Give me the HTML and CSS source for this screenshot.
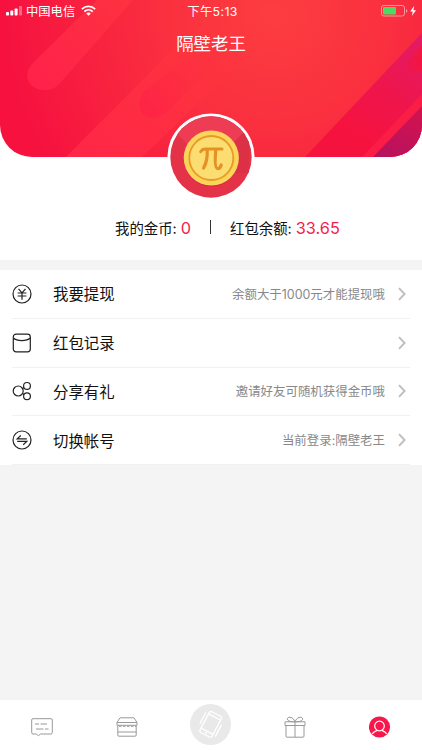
FILE: index.html
```html
<!DOCTYPE html>
<html lang="zh-CN">
<head>
<meta charset="utf-8">
<meta name="viewport" content="width=device-width, initial-scale=1">
<title>隔壁老王</title>
<link rel="stylesheet" href="styles.css">
</head>
<body>
<div class="app">
  <header class="hero">
    <svg class="hero-bg" viewBox="0 0 422 157" preserveAspectRatio="none">
      <defs>
        <radialGradient id="base" gradientUnits="userSpaceOnUse" cx="275" cy="15" r="275">
          <stop offset="0" stop-color="#fc3d40"/><stop offset=".4" stop-color="#fa303f"/><stop offset="1" stop-color="#f6113f"/>
        </radialGradient>
        <linearGradient id="pill" gradientUnits="userSpaceOnUse" x1="40" y1="80" x2="120" y2="0">
          <stop offset="0" stop-color="#ff224a"/><stop offset="1" stop-color="#fd3140"/>
        </linearGradient>
        <linearGradient id="band" gradientUnits="userSpaceOnUse" x1="90" y1="157" x2="250" y2="0">
          <stop offset="0" stop-color="#ff2747"/><stop offset=".6" stop-color="#fd323f"/><stop offset="1" stop-color="#fc3a3e" stop-opacity="0"/>
        </linearGradient>
        <linearGradient id="inner" gradientUnits="userSpaceOnUse" x1="145" y1="112" x2="215" y2="40">
          <stop offset="0" stop-color="#fe2445"/><stop offset="1" stop-color="#fd333f" stop-opacity="0"/>
        </linearGradient>
        <linearGradient id="edge" gradientUnits="userSpaceOnUse" x1="422" y1="33" x2="350" y2="140">
          <stop offset="0" stop-color="#e31b66"/><stop offset=".55" stop-color="#ef154b"/><stop offset="1" stop-color="#f6123e"/>
        </linearGradient>
        <linearGradient id="corner" gradientUnits="userSpaceOnUse" x1="422" y1="106" x2="385" y2="157">
          <stop offset="0" stop-color="#d4124e"/><stop offset="1" stop-color="#b8125f"/>
        </linearGradient>
        <linearGradient id="spot" gradientUnits="userSpaceOnUse" x1="404" y1="0" x2="422" y2="0">
          <stop offset="0" stop-color="#ee1548" stop-opacity=".3"/><stop offset="1" stop-color="#f5153e"/>
        </linearGradient>
      </defs>
      <rect width="422" height="157" fill="url(#base)"/>
      <path d="M97 0 32 64C21 77 31 90 44 90C51 90 56 88 61 82L133 0Z" fill="url(#pill)"/>
      <path d="M66 157 222 0H305L142 157Z" fill="url(#band)"/>
      <path d="M222 30 144 91C134 106 142 118 153 118C159 118 164 115 168 111L250 30Z" fill="url(#inner)"/>
      <path d="M305 157 422 33V157Z" fill="url(#edge)"/>
      <path d="M422 45 410 57C401 68 409 76 422 70Z" fill="url(#spot)"/>
      <path d="M362 157 422 94V107L373 157Z" fill="#fa1d45"/>
      <path d="M373 157 422 106V157Z" fill="url(#corner)"/>
    </svg>
    <div class="status">
      <div class="carrier">
        <svg width="17" height="10" viewBox="0 0 17 10" fill="#fff"><rect x="0" y="6" width="3" height="3.5" rx=".7"/><rect x="4.3" y="4.4" width="3" height="5.1" rx=".7"/><rect x="8.6" y="2.5" width="3" height="7" rx=".7"/><rect x="13" y="0" width="3" height="9.5" rx=".7" opacity=".35"/></svg>
        <span class="carrier-name">中国电信</span>
        <svg width="15" height="11" viewBox="0 0 15 11" fill="none" stroke="#fff" stroke-width="1.9"><path d="M.9 4.1C4.6.4 10.4.4 14.1 4.1M3.3 6.6C5.7 4.3 9.3 4.3 11.7 6.6"/><path d="M7.5 10.8 5.2 8.4C6.5 7.2 8.5 7.2 9.8 8.4Z" fill="#fff" stroke="none"/></svg>
      </div>
      <span class="clock">下午5:13</span>
      <svg class="battery" width="37" height="12" viewBox="0 0 37 12"><rect x=".5" y=".5" width="23" height="10.5" rx="2.3" fill="none" stroke="#fff" stroke-opacity=".5"/><rect x="2" y="2" width="13" height="7.5" rx=".8" fill="#4cd964"/><path d="M25 4V8Q26.4 7 26.4 6T25 4" fill="#fff" opacity=".5"/><path d="M33.2.8 29.2 6.5H31.8L30.8 11 35 5.2H32.4Z" fill="#fff"/></svg>
    </div>
    <h1 class="title">隔壁老王</h1>
  </header>
  <section class="profile">
    <svg class="avatar" viewBox="0 0 88 88">
      <defs><clipPath id="disc"><circle cx="44" cy="44" r="40.7"/></clipPath></defs>
      <circle cx="44" cy="44" r="43.6" fill="#fff"/>
      <g clip-path="url(#disc)">
        <rect width="88" height="88" fill="#e43249"/>
        <path d="M0 10 44 56 88 10V0H0Z" fill="#ed3c54"/>
        <path d="M65 31 82 14V60L60 60Z" fill="#dc3047"/>
      </g>
      <circle cx="44.3" cy="46" r="27.6" fill="#dc293c"/>
      <circle cx="44.3" cy="45" r="27.6" fill="#fbd45c"/>
      <circle cx="44.3" cy="45" r="22" fill="#fbdd72" stroke="#e99a25" stroke-width="1.8"/>
      <path d="M33.7 38.6C35 36.2 36.5 36 39 36H55" fill="none" stroke="#e59124" stroke-width="3" stroke-linecap="round"/>
      <path d="M40.2 37C40.6 44 39.4 50 36.6 55M48.8 37C48 46 47.8 55 50.4 55.5C52.3 55.8 53.6 54 54.2 52" fill="none" stroke="#e59124" stroke-width="3.2" stroke-linecap="round"/>
    </svg>
    <div class="balances">
      <span>我的金币: <b>0</b></span><i class="divider"></i><span>红包余额: <b>33.65</b></span>
    </div>
  </section>
  <main class="menu">
    <div class="row">
      <svg class="icon" viewBox="0 0 20 20"><circle cx="10" cy="10" r="9"/><path d="M6.5 4.8 10 8.8 13.5 4.8M5.6 9H14.4M5.6 12H14.4M10 8.8V15.8"/></svg>
      <span class="label">我要提现</span><span class="hint">余额大于1000元才能提现哦</span>
      <svg class="arrow" viewBox="0 0 8 14"><path d="M1 1.2 6.6 7 1 12.8"/></svg>
    </div>
    <div class="row">
      <svg class="icon" viewBox="0 0 20 20"><rect x="1.3" y="1.2" width="17" height="17.6" rx="2.8"/><path d="M1.3 5C5 8.5 14.6 8.5 18.3 5"/></svg>
      <span class="label">红包记录</span><span class="hint"></span>
      <svg class="arrow" viewBox="0 0 8 14"><path d="M1 1.2 6.6 7 1 12.8"/></svg>
    </div>
    <div class="row">
      <svg class="icon" viewBox="0 0 20 20"><circle cx="6.2" cy="10" r="5"/><circle cx="15" cy="4.9" r="3.4"/><circle cx="15" cy="15.3" r="3.4"/><path d="M10.6 7.6 12 6.6M10.6 12.4 12 13.4"/></svg>
      <span class="label">分享有礼</span><span class="hint">邀请好友可随机获得金币哦</span>
      <svg class="arrow" viewBox="0 0 8 14"><path d="M1 1.2 6.6 7 1 12.8"/></svg>
    </div>
    <div class="row">
      <svg class="icon" viewBox="0 0 20 20"><circle cx="10" cy="10" r="9"/><path d="M14.8 8.8H5.2L8.8 5.5M5.2 11.4H14.8L11.2 14.7"/></svg>
      <span class="label">切换帐号</span><span class="hint">当前登录:隔壁老王</span>
      <svg class="arrow" viewBox="0 0 8 14"><path d="M1 1.2 6.6 7 1 12.8"/></svg>
    </div>
  </main>
  <nav class="tabs">
    <a class="tab"><svg width="22" height="19" viewBox="0 0 22 19"><path d="M2 .7H20Q21.3.7 21.3 2V14.5Q21.3 16 20 16H9.5L7.3 17.8 5.5 16H2Q.7 16 .7 14.5V2Q.7.7 2 .7Z"/><path d="M4 6H8M9.5 6H16M5 11H12.5M14 11H17.5"/></svg></a>
    <a class="tab"><svg width="22" height="20" viewBox="0 0 22 20"><path d="M1 5.5 4 .8H18L21 5.5V8.3H1ZM1 5.5H21M1.8 8.3V18Q1.8 19.2 3 19.2H19Q20.2 19.2 20.2 18V8.3M1.8 15H20.2"/><path d="M3 9.3H20" stroke-dasharray="2.5 1.5"/></svg></a>
    <a class="tab tab-main"><svg width="41" height="41" viewBox="0 0 41 41"><circle cx="20.5" cy="20.5" r="20.5" fill="#e9e9e9" stroke="none"/><g transform="rotate(28 20.5 20.5)" stroke="#fff" stroke-width="1.3"><rect x="13.8" y="8.6" width="13.6" height="23.5" rx="2"/><path d="M13.8 12H27.4M13.8 28H27.4M19.5 30H21.7M10.8 12V25M30.4 16V29"/></g></svg></a>
    <a class="tab"><svg width="22" height="22" viewBox="0 0 22 22"><path d="M1 5.8H21V9.5H1ZM2 9.5V20Q2 21.2 3 21.2H19Q20 21.2 20 20V9.5M11 5.8V21.2M11 5.8C8 5.8 3.5 5.5 3.3 3C3.2.4 9 .2 11 5.8ZM11 5.8C14 5.8 18.5 5.5 18.7 3C18.8.4 13 .2 11 5.8Z"/></svg></a>
    <a class="tab"><svg width="22" height="22" viewBox="0 0 22 22"><circle cx="10.5" cy="11" r="10.6" fill="#f8174a" stroke="none"/><g stroke="#fff" stroke-width="1.2"><circle cx="10.5" cy="10" r="4.8"/><path d="M3.3 18C4.5 15.7 6.5 15.3 8.3 14.4M12.7 14.4C14.5 15.3 16.5 15.7 17.7 18"/></g></svg></a>
  </nav>
</div>
</body>
</html>
```

FILE: styles.css
```css
* { box-sizing: border-box; }
body {
  margin: 0;
  color: #111;
  font-family: Inter, "Noto Sans CJK SC", sans-serif;
}
svg { display: block; flex: none; }
.app {
  display: flex;
  flex-direction: column;
  height: 750px;
  background: #f4f4f4;
}
.hero {
  position: relative;
  height: 157px;
  flex: none;
  color: #fff;
  background: #fff;
}
.hero-bg {
  position: absolute;
  inset: 0;
  width: 100%;
  height: 100%;
  border-radius: 0 0 32px 32px;
}
.status {
  position: relative;
  display: grid;
  grid-template-columns: 1fr auto 1fr;
  align-items: center;
  height: 21px;
  padding: 0 4px 0 6px;
  font-size: 12px;
}
.carrier { display: flex; align-items: center; }
.carrier-name { margin: 0 6px 0 3px; font-size: 12.3px; }
.clock { padding-left: 1px; font-size: 12.3px; letter-spacing: .4px; }
.battery { justify-self: end; }
.title {
  position: relative;
  margin: 9px 0 0;
  font-size: 17.4px;
  line-height: 28px;
  font-weight: 400;
  text-align: center;
}
.profile {
  height: 103px;
  flex: none;
  background: #fff;
}
.avatar {
  position: relative;
  width: 88px;
  height: 88px;
  margin: -44px auto 0;
}
.balances {
  display: flex;
  align-items: center;
  height: 24px;
  margin-top: 14px;
  padding-left: 115px;
  font-size: 14.4px;
}
.balances b { font-size: 16.3px; font-weight: 400; color: #f21d4b; }
.divider { width: 1px; height: 14px; margin: 0 19px; background: #333; }
.menu {
  flex: none;
  height: 195px;
  margin-top: 10px;
  padding-left: 12px;
  background: #fff;
}
.row {
  display: flex;
  align-items: center;
  height: 48.75px;
  margin-right: 12px;
  padding-right: 4px;
  border-bottom: 1px solid #f1f1f1;
}
.icon {
  width: 20px;
  height: 20px;
  fill: none;
  stroke: #222;
  stroke-width: 1.2;
}
.label { margin-left: 21px; padding-bottom: 1px; font-size: 15.4px; }
.hint {
  flex: 1;
  text-align: right;
  font-size: 12.45px;
  color: #888;
}
.arrow {
  width: 8px;
  height: 14px;
  margin-left: 13px;
  fill: none;
  stroke: #bebebe;
  stroke-width: 1.9;
}
.tabs {
  display: grid;
  grid-template-columns: repeat(5, 1fr);
  height: 50px;
  margin-top: auto;
  padding-top: 4px;
  background: #fff;
}
.tab { display: flex; align-items: center; justify-content: center; height: 46px; }
.tab svg { fill: none; stroke: #999; stroke-width: 1; }
.tab-main { height: 41px; }
```
